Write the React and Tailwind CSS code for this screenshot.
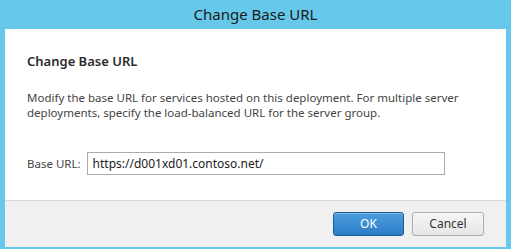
export default function App() {
  return (
    <div className="w-[511px] h-[249px] bg-[#66c8ea] flex flex-col px-[5px] pb-[2px] font-['Noto_Sans',sans-serif] text-[#333]">
      <div className="h-[29px] flex items-center justify-center text-[15px] text-[#1b1b1b] pb-[1px]">
        Change Base URL
      </div>
      <div className="flex-1 bg-white flex flex-col">
        <div className="flex-1 px-[22px] pt-[21px]">
          <h2 className="text-[13px] font-semibold text-[#2b2b2b] leading-[22px]">Change Base URL</h2>
          <p className="mt-[18px] text-[11.5px] leading-[15px] text-[#444]">
            Modify the base URL for services hosted on this deployment. For multiple server deployments, specify the load-balanced URL for the server group.
          </p>
          <div className="mt-[32px] flex items-center gap-[6px]">
            <label className="text-[11.5px] text-[#444]">Base URL:</label>
            <div className="w-[358px] h-[23px] border border-[#ababab] flex items-center px-[5px] text-[12px] text-[#222]">
              https://d001xd01.contoso.net/
            </div>
          </div>
        </div>
        <div className="h-[47px] bg-[#f0f0f0] border-t border-[#d9d9d9] flex items-center justify-end gap-[8px] pr-[22px] pb-[1px]">
          <button className="w-[71px] h-[24px] rounded-[3px] border border-[#1c5c99] bg-gradient-to-b from-[#4d9ee0] to-[#2a7cc4] text-white text-[12px] shadow-[inset_0_1px_0_rgba(255,255,255,0.3)]">
            OK
          </button>
          <button className="w-[72px] h-[24px] rounded-[3px] border border-[#acacac] bg-gradient-to-b from-[#f6f6f6] to-[#e6e6e6] text-[#333] text-[12px]">
            Cancel
          </button>
        </div>
      </div>
    </div>
  );
}
